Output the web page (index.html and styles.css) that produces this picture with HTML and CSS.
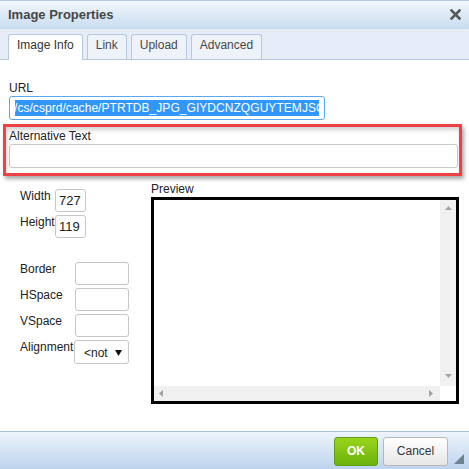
FILE: index.html
```html
<!DOCTYPE html>
<html>
<head>
<meta charset="utf-8">
<title>Image Properties</title>
<link rel="stylesheet" href="styles.css">
</head>
<body>
<div class="dialog">
  <div class="titlebar">
    <span class="title">Image Properties</span>
    <svg class="close" width="11" height="11" viewBox="0 0 11 11"><path d="M1.5 1.5 L9.5 9.5 M9.5 1.5 L1.5 9.5" stroke="#595959" stroke-width="2.6" stroke-linecap="square"/></svg>
  </div>
  <div class="tabs">
    <div class="tab active">Image Info</div>
    <div class="tab">Link</div>
    <div class="tab">Upload</div>
    <div class="tab">Advanced</div>
  </div>
  <div class="content">
    <label class="label">URL</label>
    <div class="input url-input"><div class="url-clip"><span class="sel">/cs/csprd/cache/PTRTDB_JPG_GIYDCNZQGUYTEMJSC</span></div></div>
    <div class="highlight">
      <label class="label">Alternative Text</label>
      <div class="input alt-input"></div>
    </div>
    <div class="lower">
      <div class="dims">
        <div class="grid size-grid">
          <span class="label">Width</span>
          <div class="input small">727</div>
          <span class="label">Height</span>
          <div class="input small">119</div>
        </div>
        <div class="grid space-grid">
          <span class="label">Border</span>
          <div class="input"></div>
          <span class="label">HSpace</span>
          <div class="input"></div>
          <span class="label">VSpace</span>
          <div class="input"></div>
          <span class="label">Alignment</span>
          <div class="input select"><span>&lt;not</span><svg width="7" height="6" viewBox="0 0 7 6"><path d="M0 0 H7 L3.5 6 Z" fill="#111"/></svg></div>
        </div>
      </div>
      <div class="preview-col">
        <span class="label">Preview</span>
        <div class="preview-box">
          <div class="preview-area"></div>
          <div class="vbar">
            <svg width="7" height="4" viewBox="0 0 7 4"><path d="M0 4 L3.5 0 L7 4 Z" fill="#a3a3a3"/></svg>
            <svg width="7" height="4" viewBox="0 0 7 4"><path d="M0 0 H7 L3.5 4 Z" fill="#a3a3a3"/></svg>
          </div>
          <div class="hbar">
            <svg width="4" height="7" viewBox="0 0 4 7"><path d="M4 0 V7 L0 3.5 Z" fill="#a3a3a3"/></svg>
            <svg width="4" height="7" viewBox="0 0 4 7"><path d="M0 0 V7 L4 3.5 Z" fill="#a3a3a3"/></svg>
          </div>
          <div class="corner"></div>
        </div>
      </div>
    </div>
  </div>
  <div class="footer">
    <div class="btn ok">OK</div>
    <div class="btn cancel">Cancel</div>
    <svg class="grip" width="10" height="10" viewBox="0 0 10 10"><path d="M10 0 V10 H0 Z" fill="#6f8092"/></svg>
  </div>
</div>
</body>
</html>
```
FILE: styles.css
```css
* { box-sizing: border-box; }
html, body { margin: 0; padding: 0; }
body {
  width: 469px;
  height: 469px;
  overflow: hidden;
  background: #fff;
  font-family: "Liberation Sans", Arial, sans-serif;
  font-size: 12px;
  color: #222;
}
.dialog {
  width: 469px;
  height: 469px;
  display: flex;
  flex-direction: column;
}
.titlebar {
  flex: none;
  height: 29px;
  display: flex;
  align-items: center;
  justify-content: space-between;
  padding: 0 8px 1px 8px;
  border-top: 1px solid #b5cbe3;
  background: linear-gradient(#f2f7fc, #c8dcf0);
}
.title {
  font-size: 13px;
  font-weight: bold;
  color: #474747;
  line-height: 16px;
}
.close { display: block; }
.tabs {
  flex: none;
  height: 31px;
  display: flex;
  align-items: flex-end;
  gap: 4px;
  padding-left: 8px;
  background: #e6edf8;
  border-bottom: 1px solid #b6c9df;
}
.tab {
  height: 25px;
  padding: 0 8px;
  border: 1px solid #b6c9df;
  border-bottom: none;
  border-radius: 3px 3px 0 0;
  background: #eef3fa;
  color: #474747;
  font-size: 12px;
  line-height: 21px;
}
.tab.active {
  height: 26px;
  margin-bottom: -1px;
  background: #fff;
  color: #333;
}
.content {
  flex: 1;
  padding: 21px 11px 0 9px;
}
.label {
  display: block;
  line-height: 14px;
  color: #222;
}
.input {
  height: 23px;
  border: 1px solid #c6c6c6;
  border-radius: 3px;
  background: #fff;
}
.url-input {
  margin-top: 1px;
  width: 316px;
  height: 24px;
  border-color: #5aa9f0;
  padding: 0 5px;
  display: flex;
  align-items: center;
}
.url-clip {
  flex: 1;
  overflow: hidden;
  white-space: nowrap;
}
.sel {
  display: inline-block;
  background: #3297fd;
  color: #fff;
  font-size: 12px;
  line-height: 16px;
  margin-left: -1px;
  letter-spacing: 0.05px;
}
.highlight {
  margin: 4px -4px 0 -6px;
  border: 3px solid #ef4044;
  padding: 2px 1px 5px 3px;
  box-shadow: 2px 3px 4px rgba(0, 0, 0, 0.35), inset 1px 3px 4px rgba(0, 0, 0, 0.18);
}
.alt-input {
  margin-top: 1px;
  height: 24px;
}
.lower {
  display: flex;
  margin-top: 6px;
}
.dims {
  flex: none;
  width: 142px;
  padding: 7px 0 0 11px;
}
.grid {
  display: grid;
  row-gap: 3px;
  grid-auto-rows: 23px;
  align-items: start;
}
.size-grid { grid-template-columns: 35px 31px; }
.space-grid {
  margin-top: 24px;
  grid-template-columns: 55px 54px;
}
.small {
  font-size: 13px;
  line-height: 21px;
  padding-left: 3px;
  color: #222;
}
.select {
  height: 24px;
  display: flex;
  align-items: center;
  justify-content: space-between;
  padding: 1px 6px 0 9px;
  font-size: 12px;
  color: #222;
  margin-left: -1px;
}
.preview-col {
  flex: none;
  width: 308px;
}
.preview-box {
  margin-top: 1px;
  height: 207px;
  border: 3px solid #000;
  display: grid;
  grid-template-columns: 1fr 16px;
  grid-template-rows: 1fr 15px;
}
.preview-area { background: #fff; }
.vbar {
  background: #f0f0f0;
  display: flex;
  flex-direction: column;
  justify-content: space-between;
  align-items: center;
  padding: 6px 0 8px 0;
}
.hbar {
  background: #f0f0f0;
  display: flex;
  justify-content: space-between;
  align-items: center;
  padding: 0 7px 0 5px;
}
.corner { background: #fff; }
.vbar svg, .hbar svg { display: block; }
.footer {
  flex: none;
  height: 38px;
  display: flex;
  justify-content: flex-end;
  align-items: flex-start;
  gap: 5px;
  padding: 5px 5px 0 0;
  border-top: 1px solid #a8bed6;
  background: linear-gradient(#eef4fb, #bdd4ee);
}
.btn {
  height: 29px;
  border-radius: 3px;
  font-size: 12px;
  line-height: 27px;
  text-align: center;
}
.ok {
  width: 44px;
  border: 1px solid #5f9e14;
  background: linear-gradient(#9bd51c, #6ab20c);
  color: #fff;
  font-weight: bold;
}
.cancel {
  width: 65px;
  border: 1px solid #b8b8b8;
  background: linear-gradient(#ffffff, #e6e6e6);
  color: #333;
}
.grip {
  display: block;
  align-self: flex-end;
  margin: 0 0 5px 1px;
}
```
